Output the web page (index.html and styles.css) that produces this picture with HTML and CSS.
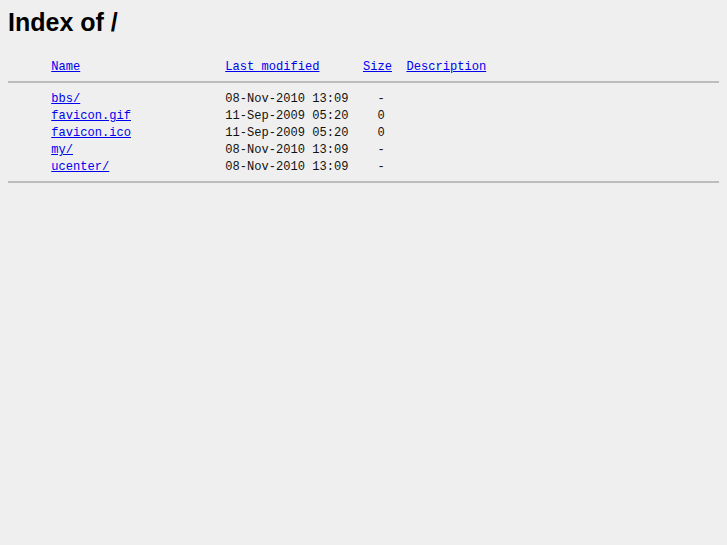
FILE: index.html
```html
<!DOCTYPE html>
<html>
<head>
<meta charset="utf-8">
<title>Index of /</title>
<link rel="stylesheet" href="styles.css">
</head>
<body>
<h1 class="title">Index of /</h1>
<pre class="listing"><span class="icon"></span> <a href="?C=N;O=D">Name</a>                    <a href="?C=M;O=A">Last modified</a>      <a href="?C=S;O=A">Size</a>  <a href="?C=D;O=A">Description</a><hr class="rule rule-top"><span class="icon"></span> <a href="bbs/">bbs/</a>                    08-Nov-2010 13:09    -   
<span class="icon"></span> <a href="favicon.gif">favicon.gif</a>             11-Sep-2009 05:20    0   
<span class="icon"></span> <a href="favicon.ico">favicon.ico</a>             11-Sep-2009 05:20    0   
<span class="icon"></span> <a href="my/">my/</a>                     08-Nov-2010 13:09    -   
<span class="icon"></span> <a href="ucenter/">ucenter/</a>                08-Nov-2010 13:09    -   
<hr class="rule rule-bottom"></pre>
</body>
</html>
```

FILE: styles.css
```css
html {
  background: #efefef;
}

body {
  margin: 8px;
  background: #efefef;
  color: #000;
}

.title {
  margin: 0 0 22px;
  font-family: "Liberation Sans", Arial, sans-serif;
  font-size: 25px;
  font-weight: bold;
  line-height: 29px;
}

.listing {
  margin: 0;
  font-family: "Liberation Mono", "Courier New", monospace;
  font-size: 12.08px;
  line-height: 17px;
  color: #111;
}

.listing a {
  color: #0000ee;
}

.icon {
  display: inline-block;
  width: 36px;
  height: 1px;
}

.rule {
  height: 0;
  border: 0;
  border-top: 2px solid #bdbdbd;
}

.rule-top {
  margin: 5px -1px 8px;
}

.rule-bottom {
  margin: 5px -1px 0;
}
```
